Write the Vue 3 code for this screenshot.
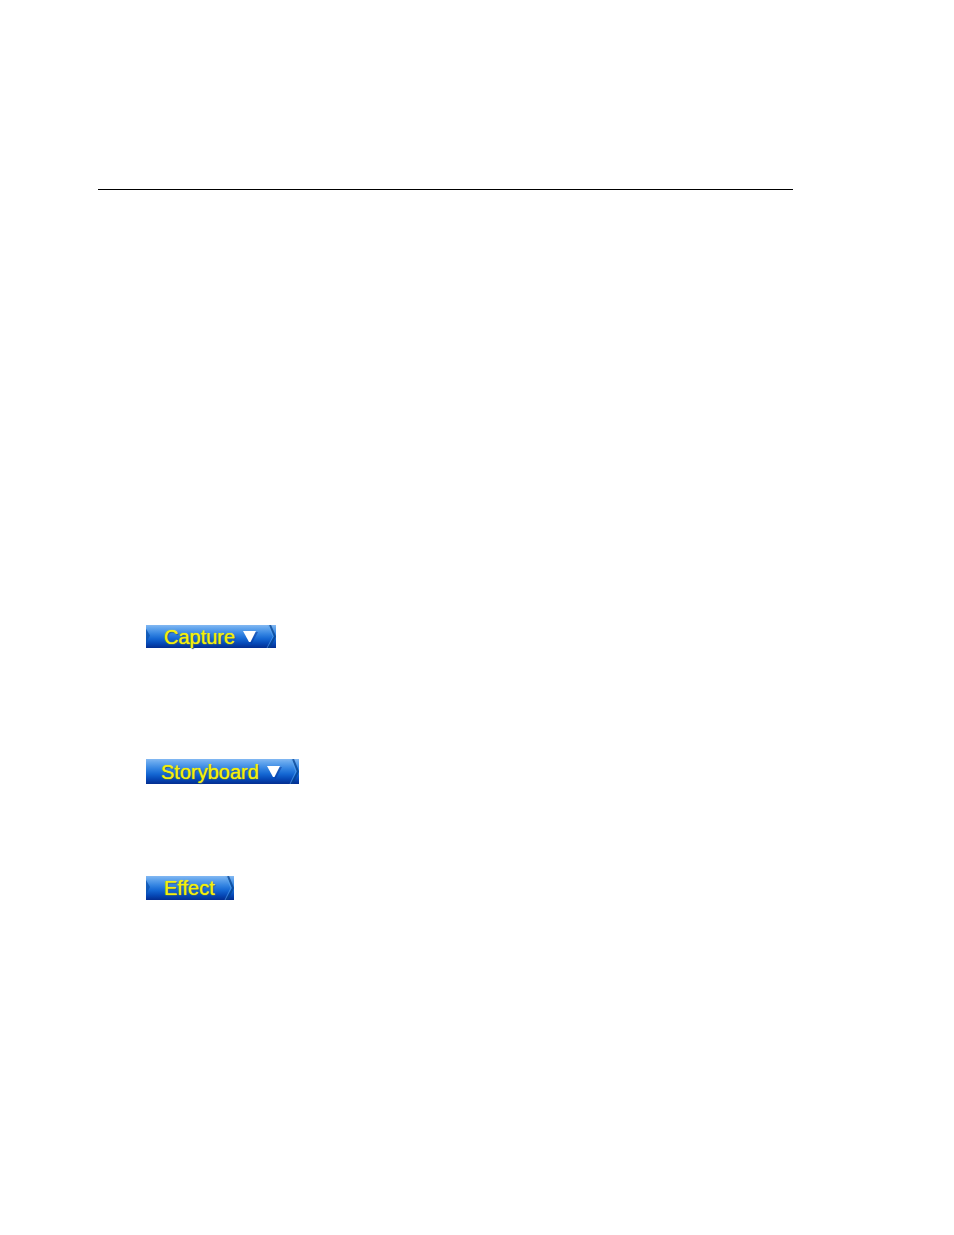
<script setup>
const steps = [
  { id: 'capture', label: 'Capture', menu: true, notch: true },
  { id: 'storyboard', label: 'Storyboard', menu: true, notch: false },
  { id: 'effect', label: 'Effect', menu: false, notch: true },
]
</script>

<template>
  <main class="page">
    <hr class="page__rule">
    <div class="steps">
      <button
        v-for="step in steps"
        :key="step.id"
        type="button"
        class="step"
        :class="`step--${step.id}`"
      >
        <svg v-if="step.notch" class="step__notch" viewBox="0 0 5 24" preserveAspectRatio="none" aria-hidden="true">
          <path d="M0 4 L4 11 L0 19 Z" fill="#0c54b0" opacity="0.8" />
        </svg>
        <span class="step__label">{{ step.label }}</span>
        <svg v-if="step.menu" class="step__arrow" viewBox="0 0 16 14" aria-hidden="true">
          <path d="M2 2 H16 L9.500 14 Z" fill="#07369a" opacity="0.5" />
          <path d="M1 1 H14 L8.500 12 H7 Z" fill="#fff" />
        </svg>
        <svg class="step__end" viewBox="0 0 10 24" preserveAspectRatio="none" aria-hidden="true">
          <path d="M4 0 L9 12 L3 24" fill="none" stroke="#06418f" stroke-width="2" opacity="0.75" />
          <path d="M2 0 L7 12 L1 24" fill="none" stroke="#5aa8f0" stroke-width="1" opacity="0.6" />
        </svg>
      </button>
    </div>
  </main>
</template>

<style>
body {
  margin: 0;
  background: #fff;
}
</style>

<style scoped>
.page {
  padding: 189px 161px 0 98px;
  font-family: "Liberation Sans", Arial, sans-serif;
}

.page__rule {
  height: 1px;
  margin: 0;
  border: 0;
  background: #000;
}

.steps {
  display: flex;
  flex-direction: column;
  align-items: flex-start;
  padding: 435px 0 0 48px;
}

.step {
  position: relative;
  display: flex;
  align-items: center;
  box-sizing: border-box;
  height: 24px;
  margin: 0;
  padding: 0 18px;
  border: 0;
  background: linear-gradient(#83b8f2 0%, #62a5ed 14%, #3585e2 38%, #1467d3 60%, #0649b7 80%, #032d90 100%);
  color: #f4f00c;
  font-family: inherit;
  font-size: 20px;
  line-height: 24px;
  text-shadow: 0 0 1px #f4f00c, 1px 1px 1px #244f80;
  cursor: pointer;
}

.step--capture {
  height: 23px;
}

.step--storyboard {
  height: 25px;
  margin-top: 111px;
  padding: 0 17px 0 15px;
}

.step--effect {
  margin-top: 92px;
  padding-right: 19px;
}

.step__arrow {
  width: 16px;
  height: 14px;
  margin-left: 7px;
}

.step__notch {
  position: absolute;
  top: 0;
  left: 0;
  width: 5px;
  height: 100%;
}

.step__end {
  position: absolute;
  top: 0;
  right: 0;
  width: 10px;
  height: 100%;
}
</style>
